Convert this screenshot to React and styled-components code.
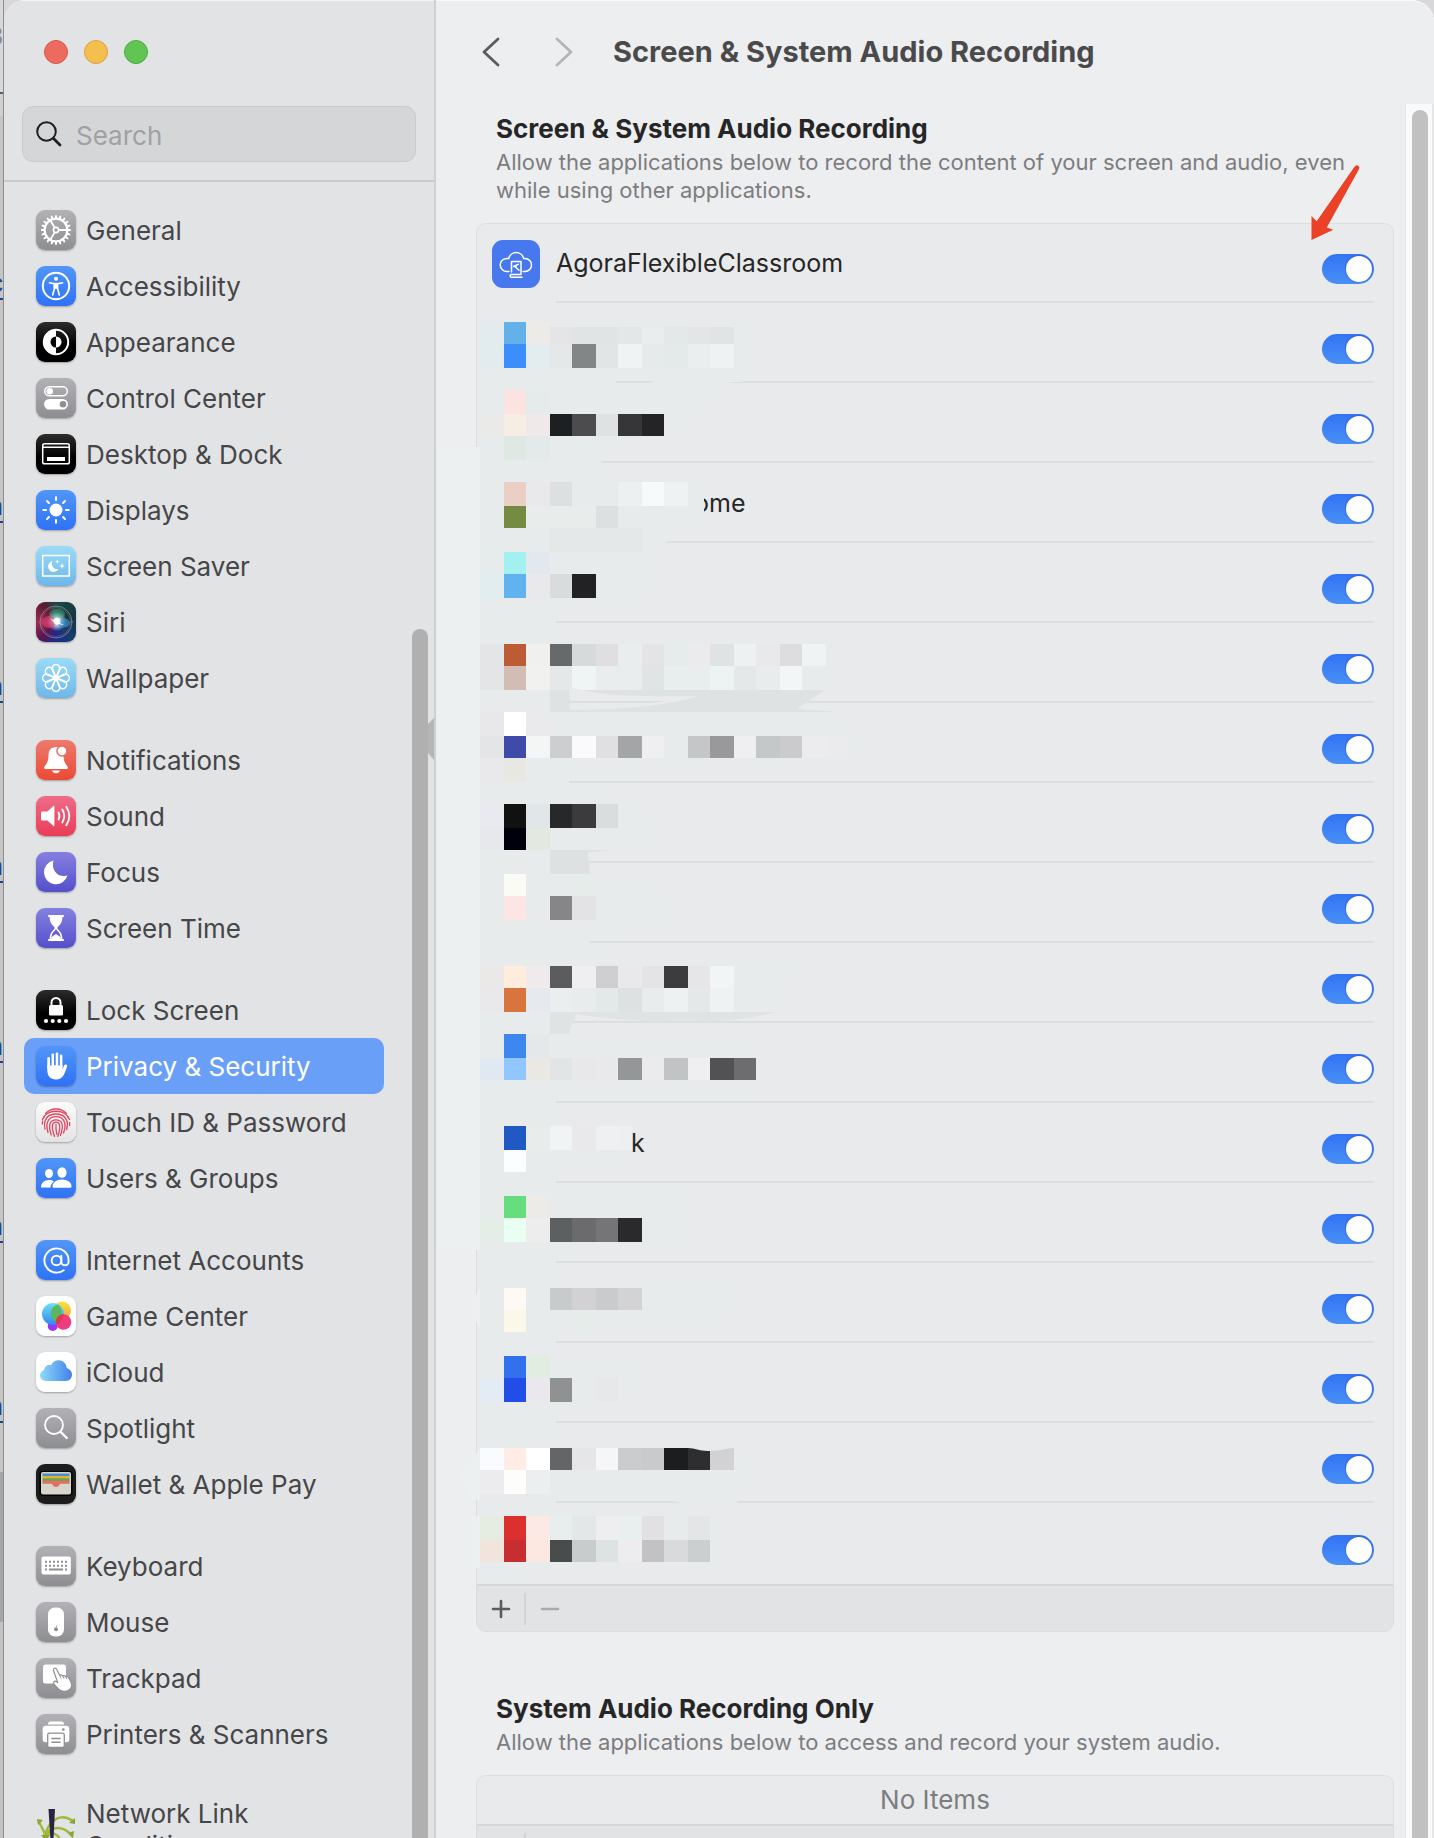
import React from "react";
import styled, { createGlobalStyle, css } from "styled-components";
import { AtSign } from "lucide-react";

const Global = createGlobalStyle`
  *, *::before, *::after { box-sizing: border-box; }
  html, body { margin: 0; }
  body {
    background: #c9c9c8;
    font-family: Inter, "Liberation Sans", sans-serif;
    font-size: 26px;
    overflow: hidden;
  }
  button { font: inherit; border: 0; padding: 0; background: none; }
  h1, h2, p, ul { margin: 0; padding: 0; }
  ul { list-style: none; }
`;

/* ---------- desktop and window ---------- */

const Desktop = styled.div`
  display: flex;
  height: 100vh;
  background: linear-gradient(#d8d8da 0 92px, #5c5c5c 92px 94px, #d0cfcd 94px 116px, #c6c5c3 116px 1472px, #a5a5a5 1472px 1622px, #c4c3c2 1622px);
`;

const Behind = styled.div`
  flex: 0 0 4px;
  overflow: hidden;
  display: flex;
  flex-direction: column;
  align-items: flex-end;
  border-right: 1px solid #8e8e8e;
  font-family: "Liberation Sans", sans-serif;
`;

const BehindText = styled.span`
  flex: none;
  height: 267px;
  line-height: 72px;
  color: #8c8c8e;
`;

const BehindLink = styled.a`
  flex: none;
  height: ${(p) => p.$height}px;
  line-height: 32px;
  color: #1d4694;
  text-underline-offset: 6px;
`;

const Window = styled.main`
  flex: 1;
  min-width: 0;
  display: flex;
  border-radius: 22px 22px 0 0;
  overflow: hidden;
  background: #edeef0;
  box-shadow: inset 0 1px 0 #fafafa;
`;

/* ---------- sidebar ---------- */

const Sidebar = styled.aside`
  flex: 0 0 432px;
  min-width: 0;
  display: flex;
  flex-direction: column;
  background: #e2e3e5;
  border-right: 2px solid #cdcfd3;
  box-shadow: inset 0 1px 0 #f4f4f4;
`;

const SidebarTop = styled.div`
  padding: 40px 18px 18px;
  border-bottom: 2px solid #c9cacc;
`;

const Lights = styled.div`
  display: flex;
  gap: 16px;
  padding-left: 22px;
  margin-bottom: 42px;
`;

const Light = styled.button`
  width: 24px;
  height: 24px;
  border-radius: 50%;
  background: ${(p) => p.$fill};
  border: 1px solid ${(p) => p.$edge};
`;

const SearchBox = styled.label`
  display: flex;
  align-items: center;
  gap: 13px;
  height: 56px;
  padding: 0 12px;
  border: 1px solid #c9cacb;
  border-radius: 11px;
  background: #d5d6d8;
`;

const SearchInput = styled.input`
  flex: 1;
  min-width: 0;
  border: 0;
  outline: 0;
  padding: 2px 0 0;
  background: transparent;
  font: inherit;
  color: #262626;
  &::placeholder { color: #a0a1a3; opacity: 1; }
`;

const SidebarBody = styled.div`
  flex: 1;
  min-height: 0;
  display: flex;
`;

const Nav = styled.nav`
  flex: 1;
  min-width: 0;
  overflow-y: auto;
  scrollbar-width: none;
  padding: 20px 28px 20px 20px;
  display: flex;
  flex-direction: column;
  gap: 26px;
`;

const NavItem = styled.a`
  display: flex;
  align-items: center;
  gap: 10px;
  min-height: 56px;
  padding: 8px 12px;
  border-radius: 10px;
  color: #464648;
  line-height: 32px;
  text-decoration: none;
  ${(p) => p.$active && css`
    background: #6a9ff8;
    color: #fff;
  `}
`;

const NavLabel = styled.span`
  padding-top: 2px;
`;

const tiles = {
  gray: "linear-gradient(#b2b2b6, #8e8d92)",
  blue: "linear-gradient(#5196f7, #2f72f5)",
  black: "linear-gradient(#2c2c2c, #000 60%)",
  sky: "linear-gradient(#9adcf8, #6fb7e9)",
  red: "linear-gradient(#ee7a6d, #ea4a35)",
  pink: "linear-gradient(#ee6c89, #ea3d57)",
  violet: "linear-gradient(#8581e0, #544fcb)",
  white: "linear-gradient(#ffffff, #fdfdfd)",
  pearl: "linear-gradient(#fbfbfb, #e4e4e4)",
  ink: "linear-gradient(#1c1c1c, #1c1c1c)",
  siri: "radial-gradient(circle at 52% 48%, #fff 0 5%, #b9c6dd 14%, transparent 34%), conic-gradient(from 0deg, #1b4a46, #15373f 20%, #183a6d 38%, #1a2a8c 50%, #5a1650 62%, #a32a55 75%, #5a1a32 90%, #1b4a46)",
  none: "none",
};

const Tile = styled.span`
  flex: none;
  display: grid;
  place-items: center;
  width: 40px;
  height: 40px;
  border-radius: 9px;
  background: ${(p) => tiles[p.$tone]};
  color: #fff;
  box-shadow: ${(p) => (p.$tone === "none" ? "none" : "0 1px 2px rgba(0, 0, 0, 0.3)")};
`;

const Rail = styled.div`
  position: relative;
  flex: 0 0 22px;
  display: flex;
  flex-direction: column;
  justify-content: flex-end;
`;

const RailThumb = styled.div`
  width: 16px;
  height: 73%;
  border-radius: 8px 8px 0 0;
  background: #b0b0b0;
`;

const RailSmudge = styled.svg`
  position: absolute;
  right: 0;
  top: 536px;
`;

/* ---------- content ---------- */

const Content = styled.section`
  flex: 1;
  min-width: 0;
  display: flex;
  flex-direction: column;
`;

const Header = styled.header`
  display: flex;
  align-items: center;
  height: 104px;
  padding-left: 37px;
`;

const NavButton = styled.button`
  display: grid;
  place-items: center;
  width: 36px;
  height: 40px;
  margin-right: 37px;
  color: ${(p) => (p.disabled ? "#b4b5b7" : "#5b5b5d")};
`;

const Title = styled.h1`
  margin-left: -6px;
  font-size: 29px;
  line-height: 40px;
  font-weight: 700;
  color: #4a4a4b;
`;

const ContentBody = styled.div`
  flex: 1;
  min-height: 0;
  display: flex;
`;

const Scroll = styled.div`
  flex: 1;
  min-width: 0;
  overflow: hidden auto;
  scrollbar-width: none;
  padding: 9px 11px 20px 40px;
  display: flex;
  flex-direction: column;
  gap: 61px;
`;

const Track = styled.div`
  flex: 0 0 29px;
  display: flex;
  padding: 6px 4px 0 6px;
  border: solid #e6e6e7;
  border-width: 0 2px 0 1px;
  background: #fafafa;
`;

const TrackThumb = styled.div`
  flex: 1;
  border-radius: 8px 8px 0 0;
  background: #c1c1c1;
`;

const SectionTitle = styled.h2`
  padding-left: 20px;
  font-size: 26px;
  line-height: 32px;
  font-weight: 700;
  color: #262626;
`;

const Caption = styled.p`
  padding: 3px 20px 0;
  margin-bottom: 19px;
  font-size: 22px;
  line-height: 28px;
  color: #7c7d7f;
`;

const Panel = styled.div`
  position: relative;
  border: 1px solid #dcdddf;
  border-radius: 10px;
  background: #e9eaec;
`;

const Row = styled.li`
  display: flex;
  align-items: center;
  gap: 16px;
  height: 80px;
  padding: 0 19px 0 15px;
  &:first-child { height: 79px; }
  &:last-child { height: 81px; }
`;

const RowIcon = styled.span`
  flex: none;
  width: 48px;
  height: 48px;
`;

const RowBody = styled.div`
  flex: 1;
  align-self: stretch;
  display: flex;
  align-items: flex-end;
  justify-content: space-between;
  border-bottom: 2px solid ${(p) => (p.$last ? "transparent" : "#dddee0")};
`;

const RowName = styled.label`
  padding-left: ${(p) => p.$indent || 0}px;
  font-size: 25px;
  line-height: 76px;
  color: #262626;
`;

const Switch = styled.input`
  appearance: none;
  display: flex;
  align-items: center;
  justify-content: flex-start;
  width: 52px;
  height: 30px;
  margin: 0 0 17px;
  padding: 2px;
  border-radius: 15px;
  background: #c9cacc;
  &::before {
    content: "";
    width: 26px;
    height: 26px;
    border-radius: 50%;
    background: #fff;
    box-shadow: 0 0 2px rgba(0, 0, 0, 0.4);
  }
  &:checked {
    justify-content: flex-end;
    background: linear-gradient(#3274f3, #4a8ff8);
  }
`;

const Footer = styled.div`
  display: flex;
  align-items: center;
  height: 47px;
  border-top: 2px solid #d6d7d9;
  border-radius: 0 0 9px 9px;
  background: #e2e3e5;
`;

const FooterButton = styled.button`
  box-sizing: content-box;
  display: grid;
  place-items: center;
  width: 47px;
  height: 32px;
  color: ${(p) => (p.disabled ? "#a9aaac" : "#5b5b5d")};
  & + & { border-left: 2px solid #d3d4d6; }
`;

const Empty = styled.p`
  line-height: 48px;
  text-align: center;
  color: #7c7d7f;
`;

const MosaicLayer = styled.svg`
  position: absolute;
  left: -40px;
  top: 0;
  pointer-events: none;
`;

const ArrowLayer = styled.svg`
  position: absolute;
  right: 29px;
  top: -64px;
  pointer-events: none;
`;

/* ---------- sidebar glyphs, all on a 40 unit square ---------- */

const G = ({ children }) => (
  <svg width="40" height="40" viewBox="0 0 40 40" fill="none" stroke="currentColor" strokeLinecap="round" strokeLinejoin="round" aria-hidden="true">
    {children}
  </svg>
);

const turns = (n) => Array.from({ length: n }, (_, i) => (360 / n) * i);

const glyphs = {
  gear: (
    <G>
      <circle cx="20" cy="20" r="11.4" strokeWidth="2.2" />
      {turns(20).map((a) => <path key={a} d="M20 8V5.9" strokeWidth="2" transform={`rotate(${a} 20 20)`} />)}
      <circle cx="20" cy="20" r="2.6" strokeWidth="1.6" />
      <path d="M23 20h8M18.5 17.4l-4.2-7.2M18.5 22.6l-4.2 7.2" strokeWidth="1.8" />
    </G>
  ),
  access: (
    <G>
      <circle cx="20" cy="20" r="13.2" strokeWidth="2" />
      <circle cx="20" cy="12.8" r="2" fill="currentColor" stroke="none" />
      <path d="M13.500 16.800l5 1v4.200L16.700 29M26.500 16.800l-5 1v4.200L23.300 29" strokeWidth="1.600" />
      <path d="M18.300 17.300h3.400v5.200h-3.400z" fill="currentColor" strokeWidth=".8" />
    </G>
  ),
  appearance: (
    <G>
      <circle cx="20" cy="20" r="12.2" strokeWidth="2" />
      <path d="M20 8a12 12 0 0 0 0 24z" fill="currentColor" stroke="none" />
      <path d="M20 14.500a5.500 5.500 0 0 0 0 11z" fill="#000" stroke="none" />
      <path d="M20 14.500a5.500 5.500 0 0 1 0 11z" fill="currentColor" stroke="none" />
    </G>
  ),
  control: (
    <G>
      <rect x="8.7" y="8.7" width="22.6" height="9" rx="4.5" strokeWidth="1.5" />
      <circle cx="13.7" cy="13.2" r="3.3" fill="currentColor" stroke="none" />
      <rect x="8" y="21" width="24" height="10.6" rx="5.3" fill="currentColor" stroke="none" />
      <circle cx="27" cy="26.3" r="3.3" fill="#8f8e93" stroke="none" />
    </G>
  ),
  dock: (
    <G>
      <rect x="6.7" y="9.7" width="26.6" height="20" rx="1.8" strokeWidth="1.5" />
      <path d="M7 13.200h26" strokeWidth="1.4" />
      <rect x="11" y="23" width="18" height="4" fill="currentColor" stroke="none" />
    </G>
  ),
  sun: (
    <G>
      <circle cx="20" cy="20" r="6.5" fill="currentColor" stroke="none" />
      {turns(8).map((a) => <path key={a} d="M20 10V7.300" strokeWidth="2" transform={`rotate(${a} 20 20)`} />)}
    </G>
  ),
  saver: (
    <G>
      <rect x="6.7" y="9.5" width="26.6" height="20.5" strokeWidth="1.5" strokeLinejoin="miter" />
      <path d="M16.500 15a5.500 5.500 0 0 0 6 8 5.500 5.500 0 1 1-6-8z" fill="currentColor" stroke="none" />
      <path d="M26 17l.8 2.200 2.200.8-2.200.8-.8 2.200-.8-2.200-2.200-.8 2.200-.8zM21.300 13.500l.6 1.600 1.600.6-1.600.6-.6 1.600-.6-1.600-1.600-.6 1.600-.6z" fill="currentColor" stroke="none" />
    </G>
  ),
  siri: (
    <G>
      <circle cx="20" cy="20" r="16" stroke="#8fc5c0" strokeOpacity=".55" strokeWidth="1" />
      <circle cx="20" cy="20" r="14.5" stroke="#d05a80" strokeOpacity=".4" strokeWidth="1" />
      <ellipse cx="13" cy="20" rx="7" ry="6" fill="#e2406f" fillOpacity=".6" stroke="none" />
      <ellipse cx="28" cy="21" rx="6" ry="4.5" fill="#3a9be0" fillOpacity=".6" stroke="none" />
      <ellipse cx="21" cy="12" rx="8" ry="5" fill="#3ec28f" fillOpacity=".4" stroke="none" />
      <path d="M14 16c3 2 6 3 14 7-6-1-9-1-14-7z" fill="#fff" stroke="none" />
      <circle cx="21" cy="19" r="3.5" fill="#fff" fillOpacity=".85" stroke="none" />
    </G>
  ),
  flower: (
    <G>
      {turns(8).map((a) => (
        <path key={a} d="M20 20l-3.500-7.500a4 4 0 1 1 7 0z" strokeWidth="1.5" transform={`rotate(${a} 20 20)`} />
      ))}
    </G>
  ),
  bell: (
    <G>
      <path d="M20 7c-5 0-7.500 3.500-7.500 8.500 0 5-1.300 7.500-3.500 10.300-1.600 2.100-1 3.200 1 3.200h20c2 0 2.600-1.100 1-3.200-2.200-2.800-3.500-5.300-3.500-10.300C27.500 10.500 25 7 20 7z" fill="currentColor" stroke="none" />
      <path d="M16 30.500h8c-.5 1.800-2 2.800-4 2.800s-3.500-1-4-2.800z" fill="currentColor" stroke="none" />
      <circle cx="26" cy="11" r="5" fill="currentColor" stroke="#ec6a5a" strokeWidth="1.5" />
    </G>
  ),
  sound: (
    <G>
      <path d="M6.500 15.500h4.800L17.500 10c.4-.4.9-.2.900.4v19.200c0 .6-.5.8-.9.400l-6.200-5.500H6.500c-.9 0-1.500-.6-1.500-1.500v-6c0-.9.600-1.500 1.500-1.500z" fill="currentColor" stroke="none" />
      <path d="M22.500 16.500c1.200 2.200 1.200 4.800 0 7M26.300 13.500c2.400 4 2.400 9 0 13M30.300 10.700c3.800 5.800 3.800 12.800 0 18.600" strokeWidth="1.8" />
    </G>
  ),
  moon: <G><path d="M17.500 8.500C15 17 20.500 26 31.500 23.600A12 12 0 1 1 17.500 8.500z" fill="currentColor" stroke="none" /></G>,
  hourglass: (
    <G>
      <path d="M13 8h14M13 32h14" strokeWidth="2.2" />
      <path d="M14.300 8c0 6 2 8 4.500 10.500.8.800.8 2.200 0 3C16.300 24 14.300 26 14.300 32M25.700 8c0 6-2 8-4.500 10.500-.8.800-.8 2.200 0 3C23.700 24 25.700 26 25.700 32" strokeWidth="1.6" />
      <path d="M14.500 9h11v4c-1 3-3.500 4.500-5.500 7-2-2.500-4.500-4-5.500-7zM15 31c0-2 2.500-3.500 5-5 2.500 1.500 5 3 5 5z" fill="currentColor" stroke="none" />
    </G>
  ),
  lock: (
    <G>
      <path d="M15.500 16v-3.500a4.500 4.500 0 0 1 9 0V16" strokeWidth="2" />
      <rect x="13" y="15" width="14" height="10.5" rx="1.5" fill="currentColor" stroke="none" />
      {[10, 16.7, 23.3, 30].map((x) => <circle key={x} cx={x} cy="31" r="2.1" fill="currentColor" stroke="none" />)}
    </G>
  ),
  hand: (
    <G>
      <path d="M12.700 12.500V22M16.800 9v12M21 8v13M25 10v12" strokeWidth="2.8" />
      <path d="M11.300 19h15v4.500l1.800-4c.7-1.600 3.500-1 2.900.9-1 3.200-2 6.400-3.600 9.200C25.800 32.300 23.500 33.500 20 33.500c-5.500 0-8.700-3.500-8.700-9.500z" fill="currentColor" stroke="none" />
      <path d="M14.750 11v8.500M18.900 9v10M23 9v10.500" stroke="#3b80f6" strokeWidth=".9" />
    </G>
  ),
  finger: (
    <G>
      <g stroke="#e0455e" strokeWidth="1.3">
        <path d="M9.500 11.500a14.500 14.500 0 0 1 21 0" />
        <path d="M6.500 17.500c4-11 23-11 27 0M6.300 22c0-1 .1-2 .5-3M33.600 20.500v3" />
        <path d="M9 27c-.8-3-.8-6 .2-8.500 3.500-8.700 18-8.700 21.600 0 .9 2.500.7 5.500-.1 9" />
        <path d="M12 30.500c-1.200-4-1.600-8-.2-11 2.800-6.500 13.600-6.500 16.400 0 1.300 3 .8 7.500-.7 11.500" />
        <path d="M15.200 33c-1.500-4.500-2.300-9-.9-12 2-4.300 9.400-4.300 11.400 0 1.200 3 .4 8-1.200 12.300" />
        <path d="M18.500 34.500c-1.800-5-2.800-10-1.700-12.500 1.200-2.600 5.200-2.600 6.400 0 1 2.800.2 8-1.400 12.500" />
        <path d="M20 22.500c-.4 3 .2 7 1 10" />
      </g>
    </G>
  ),
  users: (
    <G>
      <ellipse cx="13" cy="15.5" rx="4" ry="4.6" fill="currentColor" stroke="none" />
      <path d="M5 29.500c0-4.500 3.200-7.500 8-7.500 2 0 3.500.5 4.800 1.400-2 1.600-3.200 3.600-3.300 6.100z" fill="currentColor" stroke="none" />
      <ellipse cx="26" cy="14.5" rx="4.6" ry="5.2" fill="currentColor" stroke="none" />
      <path d="M16.500 28.500c0-4 4-7 9.500-7s9.500 3 9.500 7c0 .8-.4 1.200-1.200 1.200H17.700c-.8 0-1.200-.4-1.200-1.200z" fill="currentColor" stroke="none" />
    </G>
  ),
  game: (
    <G>
      <defs>
        <linearGradient id="gcBlue" x1="0" y1="0" x2="0" y2="1"><stop stopColor="#6fe0f5" /><stop offset="1" stopColor="#2f86ee" /></linearGradient>
        <linearGradient id="gcYellow" x1="0" y1="0" x2="0" y2="1"><stop stopColor="#fbe13a" /><stop offset="1" stopColor="#f6a13b" /></linearGradient>
      </defs>
      <g stroke="none">
        <circle cx="16.7" cy="30" r="5" fill="#9a35f2" />
        <circle cx="26" cy="14.5" r="9" fill="url(#gcYellow)" />
        <circle cx="17" cy="18" r="11" fill="url(#gcBlue)" />
        <path d="M22.300 8.400a9 9 0 0 0-2 17.100 11 11 0 0 0 2-17.100z" fill="#58b95c" />
        <circle cx="27.5" cy="26" r="7.8" fill="#ee3d7e" />
        <path d="M20 25.500a7.800 7.800 0 0 1 7.500-7.300A11 11 0 0 1 20 28.500z" fill="#dd3c49" />
      </g>
    </G>
  ),
  cloud: (
    <G>
      <defs><linearGradient id="icloud"><stop stopColor="#8fdaf8" /><stop offset="1" stopColor="#4281ea" /></linearGradient></defs>
      <path d="M10.500 29C6.500 29 4 26.600 4 23.300c0-2.700 1.800-4.800 4.200-5.400.2-3.500 3.600-5.900 6.900-4.600C16.600 10 19.300 8.300 22.500 8.300c4.500 0 7.800 3.200 8.200 7.700 3.100.9 5.300 3.300 5.300 6.500 0 3.700-2.700 6.500-6.500 6.500z" fill="url(#icloud)" stroke="none" />
    </G>
  ),
  spotlight: (
    <G>
      <circle cx="18" cy="17" r="9" strokeWidth="1.8" />
      <path d="M24.800 24l6 6" strokeWidth="2.4" />
    </G>
  ),
  wallet: (
    <G>
      <g stroke="none">
        <rect x="3.5" y="7" width="33" height="25" rx="3" fill="#000" />
        <rect x="5" y="8" width="30" height="22.5" rx="2" fill="#d8d5cc" />
        <path d="M6.500 9.500h27v3h-27z" fill="#4a8fc4" />
        <path d="M6.500 12h27v3h-27z" fill="#e5b03b" />
        <path d="M6.500 14.300h27v3.200h-27z" fill="#5fa955" />
        <path d="M6.500 16.800h27v3h-8.200c-1.400 0-1.600.5-2 1.300-1.400 2.600-5.200 2.600-6.600 0-.4-.8-.6-1.300-2-1.300H6.500z" fill="#e4705c" />
      </g>
    </G>
  ),
  keyboard: (
    <G>
      <rect x="5.5" y="10.5" width="29.3" height="18" rx="2" fill="currentColor" stroke="none" />
      {[15.7, 19.7].map((y) => <path key={y} d={`M9 ${y}h22.500`} stroke="#8f8e93" strokeWidth="2" strokeLinecap="butt" strokeDasharray="2 2" />)}
      <path d="M9 23.500h2M13 23.500h14M29 23.500h2" stroke="#8f8e93" strokeWidth="2" strokeLinecap="butt" />
    </G>
  ),
  mouse: (
    <G>
      <rect x="12" y="5.5" width="16" height="29" rx="7" fill="currentColor" stroke="none" />
      <circle cx="20" cy="27.3" r="2" fill="#8f8e93" stroke="none" />
      <path d="M20.200 24.700l.7-.9" stroke="#8f8e93" strokeWidth="1" />
    </G>
  ),
  trackpad: (
    <G>
      <rect x="7" y="6.5" width="23" height="19" rx="2.5" fill="currentColor" stroke="none" />
      <path d="M17.500 12.500c-.8-2.200 2.200-3.400 3.200-1.200l2.900 6c1-.9 2.400-.6 3 .6 1-.8 2.400-.4 3 .8 1.200-.7 2.600-.1 3.200 1.200 1.800 3.400 3.500 5.800 2.700 8.800-.8 2.900-4 4.600-7.500 4.600-4.200 0-6-2.500-9.500-6.500-2-2.300-.3-4.300 1.700-3.200l1.500 1z" fill="currentColor" stroke="#8f8e93" strokeWidth="1.2" />
      <path d="M23.800 17.500l1.300 2.700M26.800 18l1.200 2.300M29.800 18.800l1 2" stroke="#8f8e93" strokeWidth="1" />
    </G>
  ),
  printer: (
    <G>
      <path d="M12 10.500c0-1.800.8-3 2.500-3h11c1.700 0 2.500 1.200 2.500 3z" fill="currentColor" stroke="none" />
      <rect x="6.7" y="11.7" width="26.6" height="16.5" rx="3" fill="currentColor" stroke="none" />
      <circle cx="27.3" cy="15.6" r="1.4" fill="#96959a" stroke="none" />
      <rect x="11.7" y="19.2" width="16.6" height="14.3" rx="1.8" fill="currentColor" stroke="#8f8e93" strokeWidth="1.3" />
      <path d="M16 24.500h8M16 28.300h8" stroke="#8f8e93" strokeWidth="1.5" />
    </G>
  ),
  network: (
    <G>
      <g stroke="#9dbb3a" strokeWidth="2.4">
        <path d="M3 13c2 4 5 9 6 13C14 9 26 4 37 12M9 26c8-10 19-9 27 1M9 26c5-3 10-2 14 2" />
      </g>
      <path d="M1 10l6 1-5 5zM39 9v6l-6-1zM38 22l-1 7-5-5zM5 26h9l-4 6z" fill="#8aa532" stroke="none" />
      <path d="M12.500 0h6.500l-2 40h-2z" fill="#2b2440" stroke="none" />
    </G>
  ),
  at: <AtSign size={29} strokeWidth={1.6} aria-hidden="true" />,
};

const groups = [
  [
    ["General", "gear", "gray"],
    ["Accessibility", "access", "blue"],
    ["Appearance", "appearance", "black"],
    ["Control Center", "control", "gray"],
    ["Desktop & Dock", "dock", "black"],
    ["Displays", "sun", "blue"],
    ["Screen Saver", "saver", "sky"],
    ["Siri", "siri", "siri"],
    ["Wallpaper", "flower", "sky"],
  ],
  [
    ["Notifications", "bell", "red"],
    ["Sound", "sound", "pink"],
    ["Focus", "moon", "violet"],
    ["Screen Time", "hourglass", "violet"],
  ],
  [
    ["Lock Screen", "lock", "black"],
    ["Privacy & Security", "hand", "blue"],
    ["Touch ID & Password", "finger", "pearl"],
    ["Users & Groups", "users", "blue"],
  ],
  [
    ["Internet Accounts", "at", "blue"],
    ["Game Center", "game", "white"],
    ["iCloud", "cloud", "white"],
    ["Spotlight", "spotlight", "gray"],
    ["Wallet & Apple Pay", "wallet", "ink"],
  ],
  [
    ["Keyboard", "keyboard", "gray"],
    ["Mouse", "mouse", "gray"],
    ["Trackpad", "trackpad", "gray"],
    ["Printers & Scanners", "printer", "gray"],
  ],
  [["Network Link Conditioner", "network", "none"]],
];

/* ---------- application rows ---------- */

const apps = Array.from({ length: 17 }, (_, i) => {
  if (i === 0) return { name: "AgoraFlexibleClassroom" };
  if (i === 3) return { name: "ome", indent: 138 };
  if (i === 11) return { name: "k", indent: 75 };
  return {};
});

const AgoraIcon = () => (
  <svg width="48" height="48" viewBox="0 0 48 48" fill="none" stroke="#fff" strokeWidth="1.5" strokeLinecap="round" strokeLinejoin="round" aria-hidden="true">
    <rect width="48" height="48" rx="11" fill="#4878ee" stroke="none" />
    <path d="M17 31.500h-2a6.500 6.500 0 0 1-.5-13h2.200a7.700 7.700 0 0 1 15 0h1.300a6.500 6.500 0 0 1 0 13h-2" />
    <path d="M19.500 32V21.500h9.500V34.500h-10a1.500 1.500 0 0 0 0 2.700h11" />
    <path d="M21.500 26.500l5-2.300M22.500 26.300l4.500 4M24 25.500v2" strokeWidth="1.4" />
  </svg>
);

/* ---------- privacy mosaic over the app names ---------- */

const X = [480, 504, 526, 550, 572, 596, 618, 642, 664, 688, 710, 734, 756, 780, 802, 826, 848];

const bands = [
  [322, 344, "e3ebee 64b1ea edebe8"],
  [327, 344, "- - - e5e5e6 e0e4e4 e0e4e4 e3e7e7 e9eded e4e8e8 e4e5e6 e0e4e4"],
  [344, 368, "e2ecef 3c8efd e3edef e5e8e9 828686 e1e5e6 eff3f4 e6eaea e4e9e9 ebeeee eef2f3"],
  [390, 414, "- fae3e1 e5eaea"],
  [414, 436, "eaebe8 f6ede3 efeae9 1d2022 4c4c4e dee2e2 363638 242426"],
  [436, 460, "- dfe9e4 e4eaea"],
  [482, 506, "- ebcfc5 e9e9eb dde0e0 - - ecf0f1 f6fafb eef2f3"],
  [506, 528, "- 768b42 e8edec e8edec e8edec dde0e0"],
  [528, 552, "- - - e4e8e8 e4e8e8 e4e8e8 e4e8e8"],
  [552, 574, "e5eceb a2f0ef e3e8ef"],
  [574, 598, "e1edef 61b3ef e9e9eb d8dcdc 222224"],
  [644, 666, "e4e5e7 bb5c35 f0f1ef 666a6a d7dada dfdfe1 e9eded e4e4e6 e6ebec ebebed dfe3e3 edf1f2 e9e9eb dddddf eff3f4"],
  [666, 690, "e4e5e7 d2bdb5 f1f1f0 e4e8e8 eef5f4 e9eded e9eded e1e4e4 e8eeed e8eded edf2f2 e4e8e8 e8ecec f2f6f7 e7ebeb"],
  [690, 712, "- - - dee2e2"],
  [712, 736, "e8e8ea ffffff eaeaec"],
  [736, 758, "e4e5e7 3f4aa9 f4f6f5 cdced0 fafafd e0e0e2 a4a5a6 efeff1 - c5c6c8 99999b efeff2 c4c8c9 cbcbcd ececee ebebed"],
  [758, 782, "e9e9eb e8e8e2"],
  [804, 828, "e9eaf0 111111 e1e6e9 27282a 3b3b3d d9dddd"],
  [828, 850, "e7e8ec 00000d e3e8e0"],
  [874, 896, "- fafbf4 - - e5ecea"],
  [896, 920, "- fde5e4 - 868688 e3e3e5"],
  [966, 988, "eae9e7 feecdd efebec 5b5c5e efeff1 cecfd0 e9e9eb e4e4e6 3c3c3e e6e6e8 f2f5f6"],
  [988, 1012, "e9e9eb d8753e e6eaee eaeeef e8ecec e3e8e8 dde1e1 e8ecec edf1f2 e4e8e8 eef2f3"],
  [1034, 1058, "- 3d87ee e4e8ea"],
  [1058, 1080, "e0e8f2 91c6ff e9e8e2 e1e5e5 e8e8ea e9e9eb 959698 ebebed c2c3c5 efeff1 525254 6d6c6f"],
  [1126, 1150, "- 2059c4 e8edec f0f4f5 e9e9eb eef0f2"],
  [1150, 1172, "- fafeff"],
  [1196, 1218, "- 67de7e edebe8"],
  [1218, 1242, "e4ede6 e8fff1 ededed 5c6060 6b6b6d 757577 2a2a2c"],
  [1288, 1310, "- fef9f4 - c7cbcc d2d2d4 cacbcc d3d3d5"],
  [1310, 1332, "- fbf8e9 - - e5ecea"],
  [1356, 1378, "- 3171ed e1ede1"],
  [1378, 1402, "e3ebf4 224ee8 eae7ee 909192 - e7e8e9"],
  [1448, 1470, "fafbfe feece5 ffffff 646567 e6e6e8 f6f6f8 cbcccd c9cacb 1c1d1f 2e2e30 d2d2d4"],
  [1470, 1494, "ececee fdfefc ebeff0"],
  [1516, 1540, "e5ece1 db302e fce9e6 e8eded e3e7e8 eeeef0 e8efee e1e1e3 e7ebec e4e5e7"],
  [1540, 1562, "f1e4dc c72e30 fce8e1 484c4c c8cccc dde2e2 ededef c2c2c4 d9dadc cbcfd0"],
];

const haze =
  "M480 322H504V314H534L538 332 590 328 620 326H750L754 366 742 382H730L690 412 670 436 620 448 600 463 620 478H704V530L674 532 659 552 650 556V598L556 618V640H820L826 650V690L798 709 838 712 862 740 856 758 640 776 569 780V784L645 800 652 848 589 852V875L670 890V930L589 940V944L620 956H790L798 970 775 1012H580L572 1020 568 1034H758L764 1080 750 1100H556V1126H632V1162L556 1178V1192H695V1245L556 1258V1286H735L718 1332H556V1354H636V1400L556 1410V1448H740L750 1462V1488L736 1503H684L650 1498H556V1512H720V1562H530L520 1582H480Z";

const Mosaic = () => (
  <MosaicLayer width="440" height="1360" viewBox="437 224 440 1360" aria-hidden="true">
    <path d="M437 447H480V1250H474L470 1300 480 1327V1448L466 1466 480 1520V1568H474V1516L466 1496V1466L437 1250z" fill="none" />
    <path d="M437 447H480V1250H437zM480 1289L472 1302V1316L480 1328zM480 1450L462 1466V1484L472 1500H480zM480 1516H472V1568H480z" fill="#ecf0f0" />
    <path d={haze} fill="#e7ebeb" />
    <g shapeRendering="crispEdges">
      {bands.map(([y0, y1, cells]) =>
        cells.split(" ").map((c, i) =>
          c === "-" ? null : <rect key={`${y0}-${i}`} x={X[i]} y={y0} width={X[i + 1] - X[i]} height={y1 - y0} fill={`#${c}`} />
        )
      )}
    </g>
    <path d="M550 690h275l-28 19 42 3H550z" fill="#dee2e2" />
    <path d="M569 687c30 8 60 10 129 9-30 9-60 13-128 14z" fill="#e9eaec" />
    <path d="M569 701h97l-14 2h-83zM615 381h39l-4 2h-34z" fill="#dddee0" />
    <path d="M550 850h62l-24 2 2 22h-40z" fill="#dde1e1" />
    <path d="M550 1012h226c-40 12-120 14-200 2l-7 20h-19z" fill="#dfe3e3" />
    <path d="M688 1448c8 0 10 3 20 3 14 0 18-3 26-3z" fill="#e8ebec" />
    <path d="M618 1126h14v24h-14z" fill="#ecf0f1" />
  </MosaicLayer>
);

/* ---------- page ---------- */

const Minus = () => (
  <svg width="20" height="20" viewBox="0 0 20 20" stroke="currentColor" strokeWidth="2.6" strokeLinecap="round" aria-hidden="true"><path d="M2 10h16" /></svg>
);
const Plus = () => (
  <svg width="20" height="20" viewBox="0 0 20 20" stroke="currentColor" strokeWidth="2.6" strokeLinecap="round" aria-hidden="true"><path d="M2 10h16M10 2v16" /></svg>
);

const ListFooter = () => (
  <Footer>
    <FooterButton aria-label="Add"><Plus /></FooterButton>
    <FooterButton aria-label="Remove" disabled><Minus /></FooterButton>
  </Footer>
);

export default function App() {
  return (
    <>
      <Global />
      <Desktop>
        <Behind aria-hidden="true">
          <BehindText>8</BehindText>
          <BehindLink $height={223} href="#c">c</BehindLink>
          {[0, 1, 2, 3, 4, 5].map((i) => <BehindLink key={i} $height={180} href="#m">m</BehindLink>)}
        </Behind>
        <Window>
          <Sidebar>
            <SidebarTop>
              <Lights>
                <Light aria-label="Close" $fill="#ec6a5e" $edge="#d4574b" />
                <Light aria-label="Minimize" $fill="#f5bf4f" $edge="#d9a13c" />
                <Light aria-label="Zoom" $fill="#61c554" $edge="#4caa3f" />
              </Lights>
              <SearchBox>
                <svg width="28" height="28" viewBox="0 0 28 28" fill="none" stroke="#1f1f1f" strokeLinecap="round" aria-hidden="true">
                  <circle cx="11.5" cy="11.5" r="9.3" strokeWidth="2" />
                  <path d="M18.500 18.500l6.500 6.500" strokeWidth="2.8" />
                </svg>
                <SearchInput type="search" placeholder="Search" aria-label="Search" />
              </SearchBox>
            </SidebarTop>
            <SidebarBody>
              <Nav>
                {groups.map((items) => (
                  <div key={items[0][0]}>
                    {items.map(([label, glyph, tone]) => (
                      <NavItem key={label} href={`#${glyph}`} $active={glyph === "hand"}>
                        <Tile $tone={tone}>{glyphs[glyph]}</Tile>
                        <NavLabel>{label}</NavLabel>
                      </NavItem>
                    ))}
                  </div>
                ))}
              </Nav>
              <Rail>
                <RailThumb />
                <RailSmudge width="6" height="42" viewBox="0 0 6 42" aria-hidden="true"><path d="M0 6l6-6v42l-6-7z" fill="#b4b5b7" /></RailSmudge>
              </Rail>
            </SidebarBody>
          </Sidebar>
          <Content>
            <Header>
              <NavButton aria-label="Back">
                <svg width="20" height="30" viewBox="0 0 20 30" fill="none" stroke="currentColor" strokeWidth="2.8" strokeLinecap="round" strokeLinejoin="round"><path d="M17 2L3 15l14 13" /></svg>
              </NavButton>
              <NavButton aria-label="Forward" disabled>
                <svg width="20" height="30" viewBox="0 0 20 30" fill="none" stroke="currentColor" strokeWidth="2.8" strokeLinecap="round" strokeLinejoin="round"><path d="M3 2l14 13L3 28" /></svg>
              </NavButton>
              <Title>Screen &amp; System Audio Recording</Title>
            </Header>
            <ContentBody>
              <Scroll>
                <section>
                  <SectionTitle>Screen &amp; System Audio Recording</SectionTitle>
                  <Caption>
                    Allow the applications below to record the content of your screen and audio, even while using other applications.
                  </Caption>
                  <Panel>
                    <ul>
                      {apps.map(({ name, indent }, i) => (
                        <Row key={i}>
                          <RowIcon>{i === 0 && <AgoraIcon />}</RowIcon>
                          <RowBody $last={i === apps.length - 1}>
                            <RowName htmlFor={`app-${i}`} $indent={indent}>{name}</RowName>
                            <Switch id={`app-${i}`} type="checkbox" role="switch" defaultChecked aria-label={name ? undefined : "Allow recording"} />
                          </RowBody>
                        </Row>
                      ))}
                    </ul>
                    <ListFooter />
                    <Mosaic />
                    <ArrowLayer width="56" height="84" viewBox="1308 160 56 84" aria-hidden="true">
                      <path d="M1311.500 240V216l5.200 5.200L1354.300 167q2.200-3 4.500-.8 1.200 1 0 3.300l-32 58 6.500 2.200z" fill="#eb4126" />
                    </ArrowLayer>
                  </Panel>
                </section>
                <section>
                  <SectionTitle>System Audio Recording Only</SectionTitle>
                  <Caption>Allow the applications below to access and record your system audio.</Caption>
                  <Panel>
                    <Empty>No Items</Empty>
                    <ListFooter />
                  </Panel>
                </section>
              </Scroll>
              <Track><TrackThumb /></Track>
            </ContentBody>
          </Content>
        </Window>
      </Desktop>
    </>
  );
}
